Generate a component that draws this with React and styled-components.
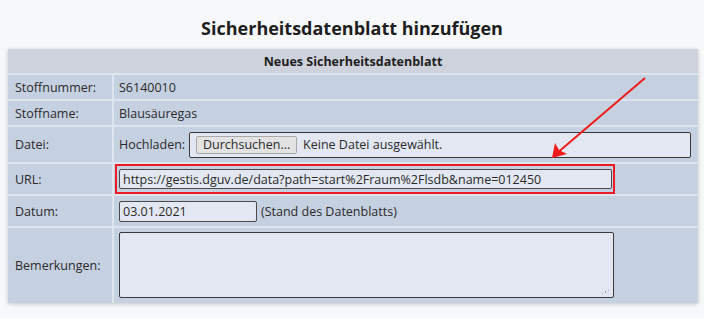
import styled, { createGlobalStyle } from 'styled-components';

const GlobalStyle = createGlobalStyle`
  body {
    margin: 0;
    background: #ffffff;
    font-family: 'Open Sans', 'Noto Sans', sans-serif;
    color: #2b2b2b;
  }
`;

const Page = styled.div`
  position: relative;
  width: 704px;
  height: 318px;
  background: #f7f8fa;
  overflow: hidden;
`;

const Title = styled.h2`
  margin: 0;
  height: 49px;
  line-height: 56px;
  text-align: center;
  font-size: 18px;
  font-weight: 700;
  color: #1e1e1e;
`;

const Form = styled.div`
  margin: 0 8px;
  width: 690px;
  display: grid;
  grid-template-columns: 104px 1fr;
  grid-template-rows: 24px 24px 24px 35px 30px 30px 75px;
  gap: 2px;
  background: #dfe5ef;
  box-shadow: 0 1px 4px rgba(0, 0, 0, 0.22);
  font-size: 12.5px;
`;

const Head = styled.div`
  grid-column: 1 / 3;
  background: #cdd2dc;
  display: flex;
  align-items: center;
  justify-content: center;
  font-weight: 700;
  font-size: 12.5px;
  color: #1e1e1e;
`;

const Label = styled.div`
  background: #c5d0e1;
  display: flex;
  align-items: center;
  padding-left: 7px;
`;

const Value = styled.div`
  background: #c5d0e1;
  display: flex;
  align-items: ${(p) => (p.$top ? 'flex-start' : 'center')};
  padding: ${(p) => (p.$top ? '4px 0 0 5px' : '0 0 0 5px')};
  gap: 4px;
`;

const Field = styled.input`
  box-sizing: border-box;
  width: ${(p) => p.$w}px;
  height: ${(p) => p.$h}px;
  margin: 0;
  padding: 0 3px;
  border: 1px solid #4a4a4a;
  border-radius: 2px;
  background: #e2e7f1;
  font-family: inherit;
  font-size: 12.5px;
  color: #2b2b2b;
  outline: none;
`;

const Highlight = styled.span`
  display: flex;
  margin-left: -4px;
  padding: 3px 1px 3px 2px;
  border: 2px solid #ec1c24;
`;

const FileBox = styled.div`
  box-sizing: border-box;
  flex: 1;
  height: 26px;
  margin-right: 7px;
  display: flex;
  align-items: center;
  gap: 6px;
  padding-left: 6px;
  border: 1px solid #3a3a3a;
  border-radius: 2px;
  background: #e2e7f1;
`;

const Browse = styled.span`
  box-sizing: border-box;
  width: 101px;
  height: 18px;
  display: flex;
  align-items: center;
  justify-content: center;
  background: #e3e3e3;
  border: 1px solid #a9a9a9;
  border-radius: 2px;
`;

const Notes = styled.textarea`
  box-sizing: border-box;
  width: 495px;
  height: 66px;
  margin: 0;
  border: 1px solid #3a3a3a;
  border-radius: 2px;
  background-color: #e2e7f1;
  background-image:
    radial-gradient(circle, #9aa0aa 0.8px, transparent 1px),
    radial-gradient(circle, #9aa0aa 0.8px, transparent 1px),
    radial-gradient(circle, #9aa0aa 0.8px, transparent 1px);
  background-repeat: no-repeat;
  background-size: 3px 9px, 3px 6px, 3px 3px;
  background-position: right 3px bottom 2px, right 6px bottom 2px, right 9px bottom 2px;
  resize: none;
  outline: none;
`;

const Arrow = styled.svg`
  position: absolute;
  left: 0;
  top: 0;
  pointer-events: none;
`;

export default function App() {
  return (
    <Page>
      <GlobalStyle />
      <Title>Sicherheitsdatenblatt hinzufügen</Title>
      <Form>
        <Head>Neues Sicherheitsdatenblatt</Head>
        <Label>Stoffnummer:</Label>
        <Value>S6140010</Value>
        <Label>Stoffname:</Label>
        <Value>Blausäuregas</Value>
        <Label>Datei:</Label>
        <Value>
          Hochladen:
          <FileBox>
            <Browse>Durchsuchen...</Browse>
            Keine Datei ausgewählt.
          </FileBox>
        </Value>
        <Label>URL:</Label>
        <Value>
          <Highlight>
            <Field
              $w={493}
              $h={20}
              readOnly
              value="https://gestis.dguv.de/data?path=start%2Fraum%2Flsdb&name=012450"
            />
          </Highlight>
        </Value>
        <Label>Datum:</Label>
        <Value>
          <Field $w={138} $h={21} readOnly value="03.01.2021" />
          (Stand des Datenblatts)
        </Value>
        <Label>Bemerkungen:</Label>
        <Value $top>
          <Notes />
        </Value>
      </Form>
      <Arrow width="704" height="318">
        <line x1="645" y1="78" x2="556" y2="154" stroke="#f01a1a" strokeWidth="2" />
        <polygon points="552,158 555,143 559,150 567,154" fill="#f01a1a" />
      </Arrow>
    </Page>
  );
}
